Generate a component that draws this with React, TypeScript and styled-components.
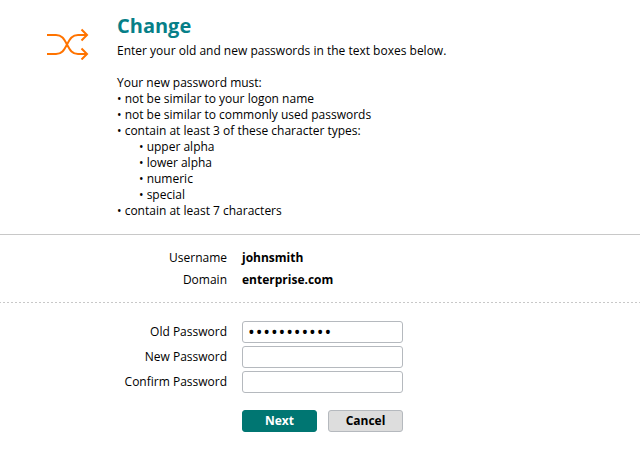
import React, { useState } from "react";
import styled, { createGlobalStyle, css } from "styled-components";

const Global = createGlobalStyle`
  * { box-sizing: border-box; }
  body { margin: 0; background: #fff; color: #000; font: 12px/16px "Open Sans", sans-serif; overflow: hidden; }
`;
const Page = styled.main`
  width: 640px;
  height: 450px;
`;
const Intro = styled.section`
  display: flex;
  height: 235px;
  padding: 11px 0 0 47px;
  border-bottom: 1px solid #c8c8c8;
`;
const ShuffleIcon = styled.svg`
  flex: none;
  width: 42px;
  height: 32px;
  margin: 17px 28px 0 0;
`;
const Title = styled.h1`
  margin: 0;
  font-size: 20px;
  line-height: 30px;
  color: #067f88;
`;
const Lead = styled.p`
  margin: 2px 0 16px;
`;
const Rules = styled.ul`
  margin: 0;
  padding: 0;
  list-style: none;
`;
const Rule = styled.li<{ $nested?: boolean }>`
  padding-left: ${(p) => (p.$nested ? 22 : 0)}px;
`;
const Account = styled.dl`
  display: grid;
  grid-template-columns: 227px 1fr;
  grid-auto-rows: 22px;
  column-gap: 15px;
  align-items: center;
  height: 68px;
  margin: 0;
  padding-top: 12px;
  background: repeating-linear-gradient(90deg, #c8c8c8 0 1px, transparent 1px 3px, #c8c8c8 3px 4px) bottom / 100% 1px no-repeat;
`;
const Term = styled.dt`
  text-align: right;
`;
const Value = styled.dd`
  margin: 0;
  font-weight: 700;
`;
const Form = styled.form`
  display: grid;
  grid-template-columns: 227px 161px;
  grid-auto-rows: 22px;
  column-gap: 15px;
  row-gap: 3px;
  align-items: center;
  padding-top: 18px;
`;
const Label = styled.label`
  text-align: right;
`;
const Input = styled.input`
  width: 161px;
  height: 22px;
  padding: 0 5px;
  border: 1px solid #b5b9be;
  border-radius: 3px;
  background: #fff;
  font: 18px/18px "Open Sans", sans-serif;
  letter-spacing: 0.87px;
  outline: none;
`;
const Actions = styled.div`
  grid-column: 2;
  display: flex;
  gap: 11px;
  margin-top: 28px;
`;
const Button = styled.button<{ $primary?: boolean }>`
  flex: none;
  width: 75px;
  height: 22px;
  padding: 0;
  border: 1px solid #b5b9be;
  border-radius: 3px;
  background: #ddd;
  color: #000;
  font: 700 12px/20px "Open Sans", sans-serif;
  ${(p) => p.$primary && css`
    border-color: #007672;
    background: #007672;
    color: #fff;
  `}
`;

const rules = [
  { text: "not be similar to your logon name" },
  { text: "not be similar to commonly used passwords" },
  { text: "contain at least 3 of these character types:" },
  { text: "upper alpha", nested: true },
  { text: "lower alpha", nested: true },
  { text: "numeric", nested: true },
  { text: "special", nested: true },
  { text: "contain at least 7 characters" },
];
const fields = [
  { id: "old", label: "Old Password" },
  { id: "new", label: "New Password" },
  { id: "confirm", label: "Confirm Password" },
];

export default function App() {
  const [values, setValues] = useState<Record<string, string>>({ old: "hunter2hunt", new: "", confirm: "" });
  return (
    <Page>
      <Global />
      <Intro>
        <ShuffleIcon viewBox="0 0 42 32" fill="none" stroke="#ff7300" strokeWidth="2">
          <path d="M0 7H9C15 7 17 11 20 16.5S25 26 31 26H40M0 26H9C15 26 17 22 20 16.5S25 7 31 7H40M34.5 1.5l5.5 5.5-5.5 5.5M34.5 20.5l5.5 5.5-5.5 5.5" />
        </ShuffleIcon>
        <div>
          <Title>Change</Title>
          <Lead>Enter your old and new passwords in the text boxes below.</Lead>
          <div>Your new password must:</div>
          <Rules>
            {rules.map((r) => <Rule key={r.text} $nested={r.nested}>• {r.text}</Rule>)}
          </Rules>
        </div>
      </Intro>
      <Account>
        <Term>Username</Term><Value>johnsmith</Value>
        <Term>Domain</Term><Value>enterprise.com</Value>
      </Account>
      <Form onSubmit={(e) => e.preventDefault()}>
        {fields.map((f) => (
          <React.Fragment key={f.id}>
            <Label htmlFor={f.id}>{f.label}</Label>
            <Input id={f.id} type="password" value={values[f.id]}
              onChange={(e) => setValues({ ...values, [f.id]: e.target.value })} />
          </React.Fragment>
        ))}
        <Actions>
          <Button $primary type="submit">Next</Button>
          <Button type="button">Cancel</Button>
        </Actions>
      </Form>
    </Page>
  );
}
